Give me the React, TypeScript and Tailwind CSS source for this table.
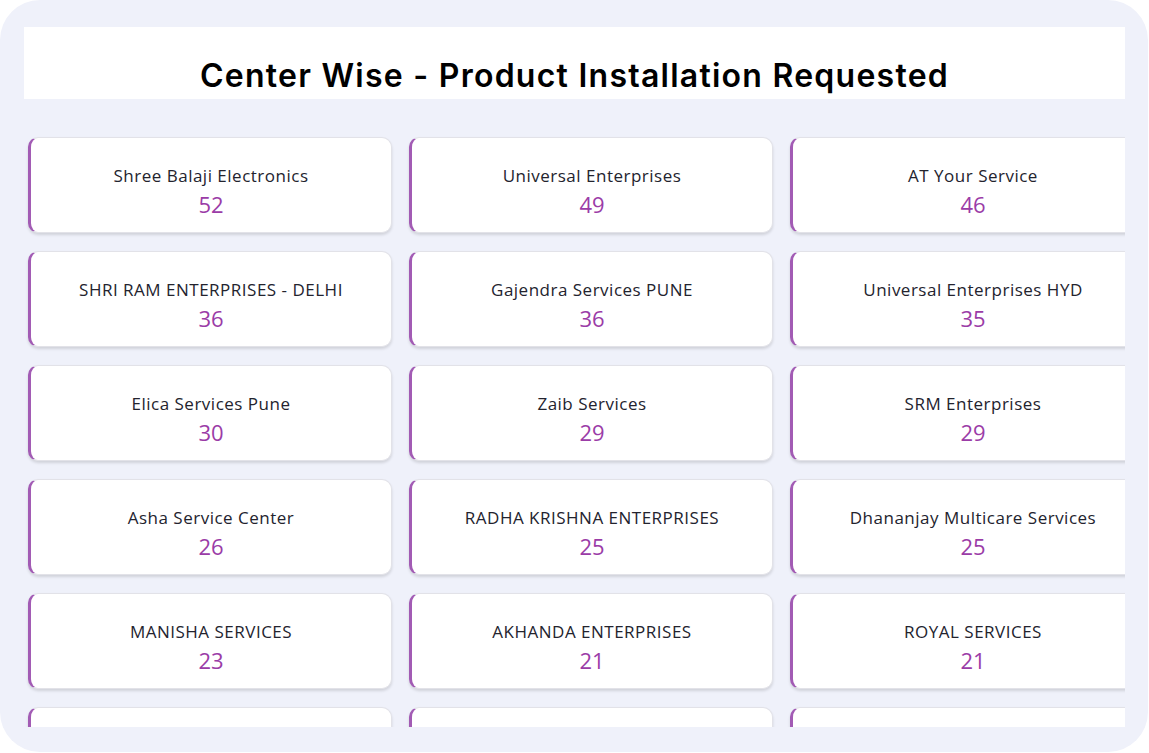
const centers = [
  { name: "Shree Balaji Electronics", count: 52 },
  { name: "Universal Enterprises", count: 49 },
  { name: "AT Your Service", count: 46 },
  { name: "SHRI RAM ENTERPRISES - DELHI", count: 36 },
  { name: "Gajendra Services PUNE", count: 36 },
  { name: "Universal Enterprises HYD", count: 35 },
  { name: "Elica Services Pune", count: 30 },
  { name: "Zaib Services", count: 29 },
  { name: "SRM Enterprises", count: 29 },
  { name: "Asha Service Center", count: 26 },
  { name: "RADHA KRISHNA ENTERPRISES", count: 25 },
  { name: "Dhananjay Multicare Services", count: 25 },
  { name: "MANISHA SERVICES", count: 23 },
  { name: "AKHANDA ENTERPRISES", count: 21 },
  { name: "ROYAL SERVICES", count: 21 },
];

const cardClass =
  "h-[96px] flex flex-col items-center justify-center gap-[4px] pt-[14px] bg-white rounded-[10px] border border-[#e2e2e8] border-l-[3px] border-l-[#a25bb4] shadow-[0_2px_3px_rgba(0,0,0,0.13)]";

const CenterCard = ({ name, count }: { name: string; count: number }) => {
  return (
    <div className={cardClass}>
      <div className="text-[17px] leading-[20px] font-medium text-[#23232e] font-['Open_Sans',sans-serif] tracking-[0.5px]">
        {name}
      </div>
      <div className="text-[22px] leading-[28px] text-[#9b3ca7] font-['Open_Sans',sans-serif]">
        {count}
      </div>
    </div>
  );
};

const App = () => {
  return (
    <div className="w-[1149px] h-[753px] bg-white">
      <div className="w-[1148px] h-[752px] rounded-[40px] bg-[#eff1fa] pt-[27px] pl-[24px] pr-[23px] pb-[25px]">
        <div className="h-full flex flex-col overflow-hidden">
          <div className="h-[72px] shrink-0 bg-white flex items-end justify-center pb-[3px]">
            <h1 className="text-[32px] leading-[40px] font-semibold text-black font-['Inter',sans-serif] tracking-[1.25px]">
              Center Wise - Product Installation Requested
            </h1>
          </div>
          <div className="pt-[38px] pl-[4px]">
            <div className="grid grid-cols-[repeat(3,364px)] gap-x-[17px] gap-y-[18px]">
              {centers.map((c) => (
                <CenterCard key={c.name} name={c.name} count={c.count} />
              ))}
              <div className={cardClass}></div>
              <div className={cardClass}></div>
              <div className={cardClass}></div>
            </div>
          </div>
        </div>
      </div>
    </div>
  );
};

export default App;
